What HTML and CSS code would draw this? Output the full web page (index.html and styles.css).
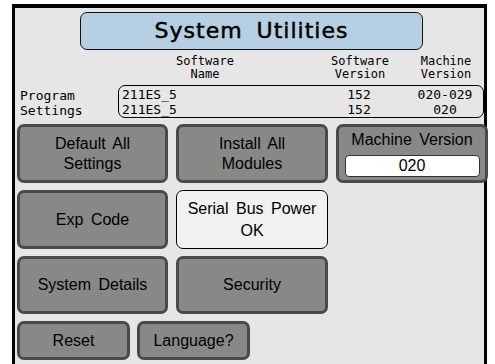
FILE: index.html
```html
<!DOCTYPE html>
<html lang="en">
<head>
  <meta charset="UTF-8">
  <title>System Utilities</title>
  <link rel="stylesheet" href="styles.css">
</head>
<body>

  <div class="frame">
    <div class="titre">System Utilities</div>

    <div class="entetes">
      <div class="col-nom">Software<br>Name</div>
      <div class="col-sw">Software<br>Version</div>
      <div class="col-mv">Machine<br>Version</div>
    </div>

    <div class="programme">
      <div class="etiquettes">Program<br>Settings</div>
      <div class="valeurs">
        <div class="col-nom gauche">211ES_5<br>211ES_5</div>
        <div class="col-sw">152<br>152</div>
        <div class="col-mv">020-029<br>020</div>
      </div>
    </div>

    <div class="boutons">
      <div class="btn">Default All<br>Settings</div>
      <div class="btn">Install All<br>Modules</div>
      <div class="btn version">
        <span>Machine Version</span>
        <div class="champ">020</div>
      </div>

      <div class="btn">Exp Code</div>
      <div class="info">Serial Bus Power<br>OK</div>
      <div></div>

      <div class="btn">System Details</div>
      <div class="btn">Security</div>
      <div></div>

      <div class="bas">
        <div class="btn petit">Reset</div>
        <div class="btn petit">Language?</div>
      </div>
    </div>
  </div>

</body>
</html>
```

FILE: styles.css
```css
body {
  margin: 0;
  background: white;
  font-family: "Liberation Sans", Arial, sans-serif;
  color: black;
}

.frame {
  margin: 4px 0 0 12px;
  width: 475px;
  height: 360px;
  background: #e6e6e6;
  border-top: 4px solid black;
  border-left: 3px solid black;
  border-right: 3px solid black;
  box-sizing: border-box;
  padding-top: 4px;
}

.titre {
  margin-left: 65px;
  width: 343px;
  height: 38px;
  box-sizing: border-box;
  background: #b7cfe2;
  border: 1.5px solid #111;
  border-radius: 7px;
  font-family: "DejaVu Sans", sans-serif;
  font-size: 22px;
  letter-spacing: 1px;
  word-spacing: 6px;
  -webkit-text-stroke: 0.5px black;
  text-align: center;
  line-height: 36px;
}

/* colonnes communes */
.entetes, .valeurs {
  display: grid;
  grid-template-columns: 170px 30px 80px 6px 80px;
}

.col-nom { grid-column: 1; text-align: center; }
.col-sw { grid-column: 3; text-align: center; }
.col-mv { grid-column: 5; text-align: center; }
.gauche { text-align: left; padding-left: 3px; }

.entetes {
  margin-left: 105px;
  font-family: "DejaVu Sans Mono", monospace;
  font-size: 12px;
  line-height: 13px;
  padding-top: 5px;
  height: 35px;
  box-sizing: border-box;
}

.programme {
  display: flex;
  height: 39px;
  font-family: "DejaVu Sans Mono", monospace;
  font-size: 13px;
  line-height: 15px;
}

.etiquettes {
  width: 105px;
  padding: 3px 0 0 5px;
  box-sizing: border-box;
}

.valeurs {
  width: 366px;
  height: 33px;
  box-sizing: border-box;
  border: 1px solid black;
  border-radius: 7px;
  padding-top: 1px;
  grid-template-columns: 179px 21px 80px 6px 80px;
}

.boutons {
  display: grid;
  grid-template-columns: 151px 152px 152px;
  grid-template-rows: 59px 59px 58px 39px;
  column-gap: 8px;
  row-gap: 7px;
  padding-left: 2px;
}

.btn, .info {
  display: flex;
  align-items: center;
  justify-content: center;
  text-align: center;
  font-size: 16px;
  line-height: 20px;
  word-spacing: 3px;
  border-radius: 7px;
  box-sizing: border-box;
}

.btn {
  background: #888986;
  border: 3px solid #4a4a4a;
}

.info {
  background: #f1f1f1;
  border: 1px solid black;
  line-height: 22px;
}

.version {
  flex-direction: column;
  justify-content: flex-start;
  padding-top: 3px;
}

.champ {
  margin-top: 5px;
  width: 135px;
  height: 22px;
  background: white;
  border: 1px solid #333;
  border-radius: 4px;
  box-sizing: border-box;
  line-height: 20px;
}

.bas {
  grid-column: 1 / 3;
  display: flex;
  gap: 7px;
}

.petit {
  width: 113px;
}
```
